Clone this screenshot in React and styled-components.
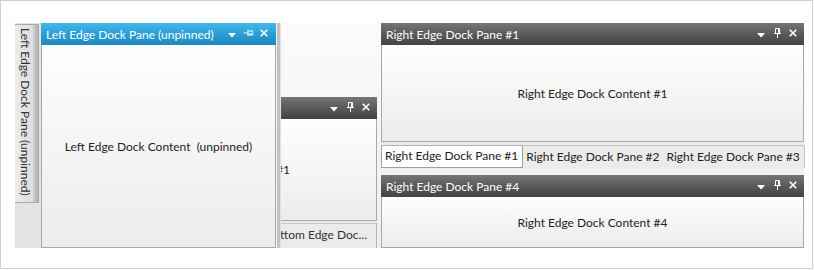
import React from "react";
import styled, { createGlobalStyle, css } from "styled-components";

const Global = createGlobalStyle`
  html, body { margin: 0; padding: 0; background: #fff; }
  body { font-family: Lato, "Open Sans", sans-serif; font-size: 12px; color: #222; }
  * { box-sizing: border-box; }
`;

const Frame = styled.div`
  width: 813px;
  height: 269px;
  border: 1px solid #cfcfcf;
  padding: 22px 0 0 14px;
  background: #fff;
`;

const Dock = styled.div`
  display: flex;
  width: 789px;
  height: 225px;
`;

const LeftStrip = styled.div`
  width: 26px;
  padding-top: 1px;
  background: #e4e4e4;
  display: flex;
  flex-direction: column;
`;

const SideTab = styled.div`
  width: 24px;
  height: 179px;
  border: 1px solid #a9a9a9;
  border-left: none;
  background: linear-gradient(to right, #ececec, #dedede 75%, #c4c4c4 85%, #b0b0b0);
  display: flex;
  justify-content: center;
  padding: 3px 3px 0 0;
`;

const SideTabLabel = styled.span`
  writing-mode: vertical-rl;
  white-space: nowrap;
  color: #333;
  font-size: 12px;
  line-height: 15px;
`;

const Main = styled.div`
  position: relative;
  width: 340px;
  padding-right: 4px;
  display: flex;
  flex-direction: column;
  justify-content: flex-end;
  background: linear-gradient(#fbfbfb, #eeeeee);
`;

const RightColumn = styled.div`
  width: 423px;
  display: flex;
  flex-direction: column;
  gap: 7px;
  background: #f1f1f1;
`;

const Pane = styled.div`
  display: flex;
  flex-direction: column;
  height: ${(p) => p.$h}px;
  background: #f6f6f6;
`;

const Header = styled.div`
  flex: none;
  height: 22px;
  display: flex;
  align-items: center;
  padding: 0 ${(p) => (p.$variant === "blue" ? 4 : 3)}px 0 5px;
  color: #fff;
  font-size: 12px;
  ${(p) =>
    p.$variant === "blue"
      ? css`background: linear-gradient(#41b8ea, #2a9fd6 50%, #1d88be);`
      : css`background: linear-gradient(#767676, #5a5a5a 50%, #434343);`}
`;

const Title = styled.span`
  flex: 1;
  white-space: nowrap;
  overflow: hidden;
`;

const IconButton = styled.span`
  width: 16px;
  height: 16px;
  display: flex;
  align-items: center;
  justify-content: center;
  margin-top: ${(p) => p.$dy || 0}px;
`;

const Body = styled.div`
  flex: 1;
  border: 1px solid #a8a8a8;
  border-top: none;
  background: linear-gradient(#fefefe, #ececec);
  display: flex;
  align-items: center;
  justify-content: center;
  color: #1e1e1e;
  font-size: 12px;
  white-space: pre;
`;

const TabStrip = styled.div`
  flex: none;
  height: ${(p) => p.$h}px;
  display: flex;
  padding-top: ${(p) => p.$pt}px;
  background: #ebebeb;
  justify-content: ${(p) => (p.$end ? "flex-end" : "flex-start")};
`;

const Tab = styled.div`
  display: flex;
  align-items: center;
  padding: 0 4px 2px 3px;
  white-space: nowrap;
  font-size: 12px;
  color: #222;
  ${(p) =>
    p.$selected
      ? css`
          background: #fff;
          border: 1px solid #9f9f9f;
          border-top-color: #b0b0b0;
        `
      : css`
          border-top: 1px solid #c6c6c6;
        `}
`;

const TabFill = styled.div`
  flex: 1;
  border-top: 1px solid #c6c6c6;
  border-right: 1px solid #c6c6c6;
`;

const BottomTab = styled.div`
  display: flex;
  align-items: center;
  flex: 1;
  justify-content: flex-end;
  padding: 0 9px 3px 0;
  border-top: 1px solid #c9c9c9;
  border-right: 1px solid #b4b4b4;
  color: #333;
  white-space: nowrap;
`;

const Flyout = styled.div`
  position: absolute;
  left: 0;
  top: 0;
  bottom: 0;
  display: flex;
`;

const FlyoutPane = styled(Pane)`
  width: 235px;
  height: auto;
`;

const Splitter = styled.div`
  width: 5px;
  background: linear-gradient(to right, #f4f4f4 0 1px, #c2c2c2 1px 4px, #e0e0e0 4px);
`;

const Triangle = () => (
  <svg width="8" height="5" viewBox="0 0 8 5">
    <polygon points="0,0 8,0 4,4.5" fill="#fff" />
  </svg>
);

const Pin = ({ unpinned }) => (
  <svg
    width="7"
    height="10"
    viewBox="0 0 7 10"
    style={unpinned ? { transform: "rotate(90deg)" } : undefined}
  >
    <g stroke="#fff" strokeWidth="1" fill="none">
      <path d="M1.5 0.5 H5.5 V5 M1.5 0.5 V5" />
      <path d="M4.5 1 V5" />
      <path d="M0 5.5 H7" />
      <path d="M3.5 5.5 V10" />
    </g>
  </svg>
);

const Close = () => (
  <svg width="8" height="8" viewBox="0 0 8 8">
    <path d="M0.7 0.7 L7.3 7.3 M7.3 0.7 L0.7 7.3" stroke="#fff" strokeWidth="1.6" />
  </svg>
);

const PaneHeader = ({ title, variant, unpinned }) => (
  <Header $variant={variant}>
    <Title>{title}</Title>
    <IconButton $dy={3}>
      <Triangle />
    </IconButton>
    <IconButton $dy={-3}>
      <Pin unpinned={unpinned} />
    </IconButton>
    <IconButton $dy={-3}>
      <Close />
    </IconButton>
  </Header>
);

const rightTabs = ["Right Edge Dock Pane #1", "Right Edge Dock Pane #2", "Right Edge Dock Pane #3"];

export default function App() {
  return (
    <>
      <Global />
      <Frame>
        <Dock>
          <LeftStrip>
            <SideTab>
              <SideTabLabel>Left Edge Dock Pane (unpinned)</SideTabLabel>
            </SideTab>
          </LeftStrip>
          <Main>
            <Pane $h={151}>
              <PaneHeader title="Bottom Edge Dock Pane #1" variant="dark" />
              <Body>Bottom Edge Dock Content #1</Body>
              <TabStrip $h={27} $pt={2} $end>
                <BottomTab>Bottom Edge Doc...</BottomTab>
              </TabStrip>
            </Pane>
            <Flyout>
              <FlyoutPane>
                <PaneHeader title="Left Edge Dock Pane (unpinned)" variant="blue" unpinned />
                <Body>{"Left Edge Dock Content  (unpinned)"}</Body>
              </FlyoutPane>
              <Splitter />
            </Flyout>
          </Main>
          <RightColumn>
            <Pane $h={145}>
              <PaneHeader title="Right Edge Dock Pane #1" variant="dark" />
              <Body>Right Edge Dock Content #1</Body>
              <TabStrip $h={26} $pt={3}>
                {rightTabs.map((t, i) => (
                  <Tab key={t} $selected={i === 0}>
                    {t}
                  </Tab>
                ))}
                <TabFill />
              </TabStrip>
            </Pane>
            <Pane $h={73}>
              <PaneHeader title="Right Edge Dock Pane #4" variant="dark" />
              <Body>Right Edge Dock Content #4</Body>
            </Pane>
          </RightColumn>
        </Dock>
      </Frame>
    </>
  );
}
